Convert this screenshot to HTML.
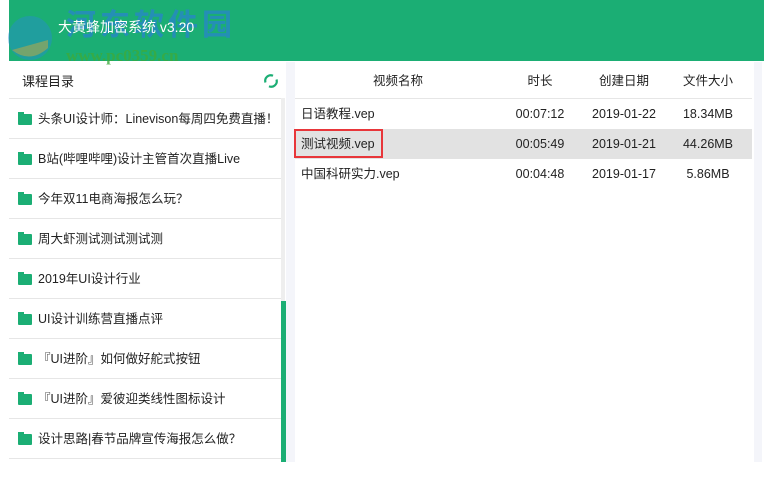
<!DOCTYPE html>
<html><head><meta charset="utf-8"><style>
body{margin:0;width:764px;height:482px;background:#fff;position:relative;overflow:hidden;font-family:"Liberation Sans","Noto Sans CJK SC",sans-serif;color:#222}
.hdr{position:absolute;left:9px;top:0;width:755px;height:61px;background:#1bae74}
.title{position:absolute;left:58px;top:17px;color:#fff;font-size:14px;line-height:20px}
.wm1{position:absolute;left:66px;top:8px;color:rgba(40,130,210,.7);font-size:30px;font-weight:bold;letter-spacing:4px;line-height:36px}
.wm2{position:absolute;left:66px;top:46px;color:rgba(60,170,60,.8);font-size:17px;font-weight:bold;font-family:"Liberation Serif",serif;line-height:20px}
.lh{position:absolute;left:22px;top:72px;font-size:13px;line-height:20px}
.row{position:absolute;left:9px;width:272px;height:40px;border-top:1px solid #e6e6e6;font-size:12.5px}
.row span{position:absolute;left:29px;top:0;line-height:40px;white-space:nowrap}
.fd{position:absolute;left:9px;top:15px;width:14px;height:11px;background:#1bae74;border-radius:1px}
.fd:before{content:"";position:absolute;left:0;top:-2px;width:6px;height:3px;background:#1bae74}
.track{position:absolute;left:281px;top:98px;width:4px;height:203px;background:#eee}
.thumb{position:absolute;left:281px;top:301px;width:5px;height:161px;background:#1bae74}
.gap{position:absolute;left:286px;top:62px;width:9px;height:400px;background:#f4f5fa}
.gap2{position:absolute;left:754px;top:62px;width:8px;height:400px;background:#f4f5fa}
.th,.tr{position:absolute;left:295px;width:457px;height:30px;font-size:12.5px;line-height:30px}
.th{top:62px;height:36px;line-height:38px;border-bottom:1px solid #e6e6e6}
.c{position:absolute;top:0;transform:translateX(-50%);white-space:nowrap}
.n{position:absolute;left:6px;top:0}
</style></head><body>
<div class="hdr"></div>
<svg style="position:absolute;left:4px;top:14px" width="56" height="56"><circle cx="26" cy="24" r="22" fill="rgba(40,140,210,.45)"/><path d="M8 36 Q26 50 44 34 L44 26 Z" fill="rgba(200,170,60,.5)"/></svg>
<div class="wm1">河东软件园</div>
<div class="wm2">www.pc0359.cn</div>
<div class="title">大黄蜂加密系统 v3.20</div>
<div class="lh">课程目录</div>
<svg style="position:absolute;left:263px;top:73px" width="16" height="16" viewBox="0 0 16 16"><path d="M2.5 9.5A5.5 5.5 0 0 1 10 2.8" fill="none" stroke="#1bae74" stroke-width="2.2"/><path d="M13.5 6.5A5.5 5.5 0 0 1 6 13.2" fill="none" stroke="#1bae74" stroke-width="2.2"/></svg>
<div class="row" style="top:98px"><i class="fd"></i><span>头条UI设计师：Linevison每周四免费直播！</span></div>
<div class="row" style="top:138px"><i class="fd"></i><span>B站(哔哩哔哩)设计主管首次直播Live</span></div>
<div class="row" style="top:178px"><i class="fd"></i><span>今年双11电商海报怎么玩？</span></div>
<div class="row" style="top:218px"><i class="fd"></i><span>周大虾测试测试测试测</span></div>
<div class="row" style="top:258px"><i class="fd"></i><span>2019年UI设计行业</span></div>
<div class="row" style="top:298px"><i class="fd"></i><span>UI设计训练营直播点评</span></div>
<div class="row" style="top:338px"><i class="fd"></i><span>『UI进阶』如何做好舵式按钮</span></div>
<div class="row" style="top:378px"><i class="fd"></i><span>『UI进阶』爱彼迎类线性图标设计</span></div>
<div class="row" style="top:418px"><i class="fd"></i><span>设计思路|春节品牌宣传海报怎么做？</span></div>
<div class="row" style="top:458px;height:4px"></div>
<div class="track"></div><div class="thumb"></div>
<div class="gap"></div><div class="gap2"></div>
<div class="th"><span class="c" style="left:103px">视频名称</span><span class="c" style="left:245px">时长</span><span class="c" style="left:329px">创建日期</span><span class="c" style="left:413px">文件大小</span></div>
<div class="tr" style="top:99px"><span class="n">日语教程.vep</span><span class="c" style="left:245px">00:07:12</span><span class="c" style="left:329px">2019-01-22</span><span class="c" style="left:413px">18.34MB</span></div>
<div class="tr" style="top:129px;background:#e2e2e2"><span class="n">测试视频.vep</span><span class="c" style="left:245px">00:05:49</span><span class="c" style="left:329px">2019-01-21</span><span class="c" style="left:413px">44.26MB</span></div>
<div style="position:absolute;left:294px;top:129px;width:89px;height:29px;border:2px solid #e8363a;box-sizing:border-box"></div>
<div class="tr" style="top:159px"><span class="n">中国科研实力.vep</span><span class="c" style="left:245px">00:04:48</span><span class="c" style="left:329px">2019-01-17</span><span class="c" style="left:413px">5.86MB</span></div>
</body></html>
